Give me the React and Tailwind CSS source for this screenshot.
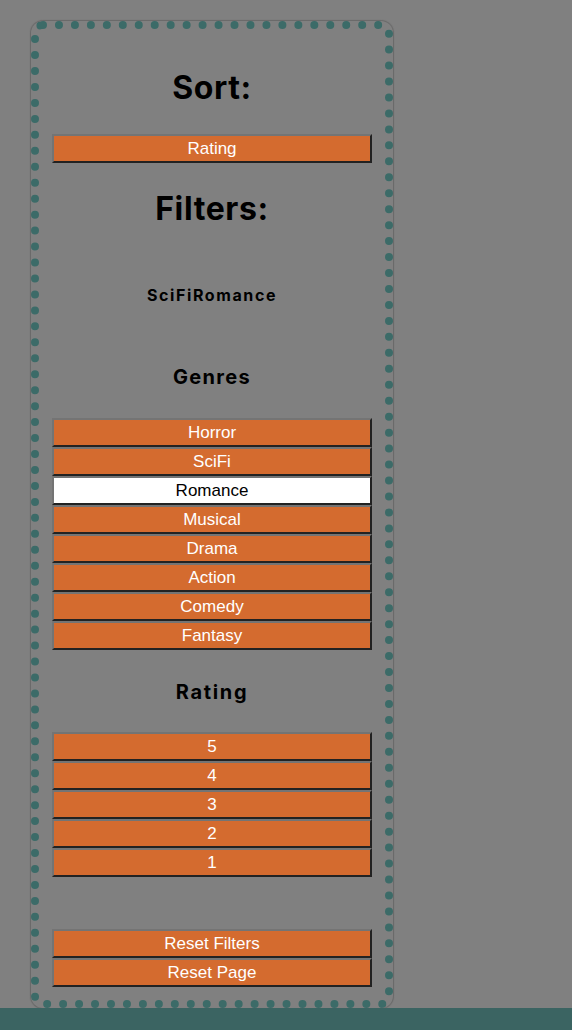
const GENRES = ['Horror', 'SciFi', 'Romance', 'Musical', 'Drama', 'Action', 'Comedy', 'Fantasy']
const RATINGS = ['5', '4', '3', '2', '1']
const SELECTED = 'Romance'

function Btn({ label, active }) {
  return (
    <button
      className={
        'w-[320px] h-[29px] flex items-center justify-center border-2 border-t-[#747474] border-l-[#747474] border-b-[#222] border-r-[#222] text-[17px] leading-none ' +
        (active ? 'bg-white text-black' : 'bg-[#d46b2f] text-white')
      }
      style={{ fontFamily: '"Liberation Sans", Arial, sans-serif' }}
    >
      {label}
    </button>
  )
}

export default function App() {
  return (
    <div className="min-h-screen bg-[#808080] flex flex-col" style={{ fontFamily: 'Inter, "Noto Sans", sans-serif' }}>
      <div className="pt-[21px] pl-[31px]">
        <aside className="w-[362px] h-[987px] border-[8px] border-dotted border-[#3c6b68] rounded-[12px] shadow-[0_0_1px_1px_rgba(60,60,60,0.35)] flex flex-col items-center pt-[39px]">
          <h1 className="text-[32px] leading-[40px] font-bold tracking-[0.6px] text-black">Sort:</h1>
          <div className="mt-[26px]">
            <Btn label="Rating" />
          </div>

          <h1 className="mt-[26px] text-[32px] leading-[40px] font-bold tracking-[0.6px] text-black">Filters:</h1>
          <p className="mt-[56px] text-[16px] leading-[20px] font-bold tracking-[1.6px] text-black">SciFiRomance</p>

          <h3 className="mt-[58px] text-[20px] leading-[28px] font-bold tracking-[1.3px] text-black">Genres</h3>
          <div className="mt-[27px] flex flex-col">
            {GENRES.map((g) => (
              <Btn key={g} label={g} active={g === SELECTED} />
            ))}
          </div>

          <h3 className="mt-[28px] text-[20px] leading-[28px] font-bold tracking-[1.7px] text-black">Rating</h3>
          <div className="mt-[26px] flex flex-col">
            {RATINGS.map((r) => (
              <Btn key={r} label={r} />
            ))}
          </div>

          <div className="mt-[52px] flex flex-col">
            <Btn label="Reset Filters" />
            <Btn label="Reset Page" />
          </div>
        </aside>
      </div>
      <footer className="h-[22px] bg-[#3b6462]" />
    </div>
  )
}
